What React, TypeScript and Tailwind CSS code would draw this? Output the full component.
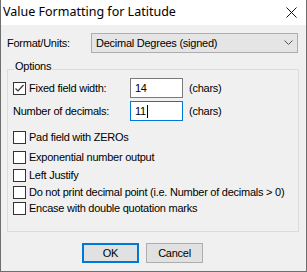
import React from 'react';

const sans = { fontFamily: '"Liberation Sans", Arial, sans-serif' };

const CheckBox = ({ checked }: { checked?: boolean }) => (
  <span className="flex h-[13px] w-[13px] shrink-0 items-center justify-center border border-[#333333] bg-white">
    {checked && (
      <svg width="11" height="11" viewBox="0 0 11 11">
        <polyline points="1.5,5.5 4,8 9.5,2" fill="none" stroke="#333333" strokeWidth="1.2" />
      </svg>
    )}
  </span>
);

const CheckRow = ({ label, checked, className }: { label: string; checked?: boolean; className: string }) => (
  <div className={`flex h-[13px] items-center ${className}`}>
    <CheckBox checked={checked} />
    <span className="ml-[3px] whitespace-nowrap leading-[13px]">{label}</span>
  </div>
);

export default function App() {
  return (
    <div
      className="flex h-[272px] w-[307px] flex-col border-x border-b border-[#6e6e6e] bg-[#f0f0f0] text-[11px] tracking-[-0.25px] text-black"
      style={sans}
    >
      {/* title bar */}
      <div className="flex h-[25px] shrink-0 items-center justify-between bg-white pl-[2px] pr-[9px]">
        <span className="text-[12.5px] tracking-normal" style={{ fontFamily: '"Noto Sans", "Open Sans", sans-serif' }}>
          Value Formatting for Latitude
        </span>
        <svg width="11" height="11" viewBox="0 0 11 11">
          <path d="M0.5 0.5 L10.5 10.5 M10.5 0.5 L0.5 10.5" stroke="#111" strokeWidth="1" />
        </svg>
      </div>

      {/* format row */}
      <div className="mt-[8px] flex items-center pl-[6px]">
        <span className="w-[84px]">Format/Units:</span>
        <div className="flex h-[20px] w-[207px] items-center justify-between border border-[#adadad] bg-[#e5e5e5] pl-[4px] pr-[4px]">
          <span>Decimal Degrees (signed)</span>
          <svg width="9" height="6" viewBox="0 0 9 6">
            <polyline points="0.5,0.5 4.5,4.5 8.5,0.5" fill="none" stroke="#555" strokeWidth="1" />
          </svg>
        </div>
      </div>

      {/* options group */}
      <div className="ml-[6px] mt-[16px] flex w-[292px] flex-col border border-[#dcdcdc] pb-[16px] pl-[5px]">
        <span className="-mt-[10px] ml-[1px] self-start bg-[#f0f0f0] px-[1px] leading-[13px]">Options</span>

        <div className="mt-[5px] flex h-[20px] items-center">
          <CheckBox checked />
          <span className="ml-[3px] w-[101px]">Fixed field width:</span>
          <div className="flex h-[20px] w-[53px] items-center border border-[#7a7a7a] bg-white pl-[4px]">14</div>
          <span className="ml-[6px]">(chars)</span>
        </div>

        <div className="mt-[3px] flex h-[20px] items-center">
          <span className="w-[117px]">Number of decimals:</span>
          <div className="flex h-[20px] w-[53px] items-center border border-[#0078d7] bg-white pl-[4px]">
            11<span className="ml-[1px] h-[13px] w-[1px] bg-black" />
          </div>
          <span className="ml-[6px]">(chars)</span>
        </div>

        <CheckRow className="mt-[10px]" label="Pad field with ZEROs" />
        <CheckRow className="mt-[7px]" label="Exponential number output" />
        <CheckRow className="mt-[5px]" label="Left Justify" />
        <CheckRow className="mt-[4px]" label="Do not print decimal point (i.e. Number of decimals > 0)" />
        <CheckRow className="mt-[3px]" label="Encase with double quotation marks" />
      </div>

      {/* buttons */}
      <div className="mt-[11px] flex gap-[7px] pl-[81px]">
        <button className="flex h-[20px] w-[57px] items-center justify-center border-2 border-[#0078d7] bg-[#e1e1e1]">
          OK
        </button>
        <button className="flex h-[20px] w-[57px] items-center justify-center border border-[#adadad] bg-[#e1e1e1]">
          Cancel
        </button>
      </div>
    </div>
  );
}
